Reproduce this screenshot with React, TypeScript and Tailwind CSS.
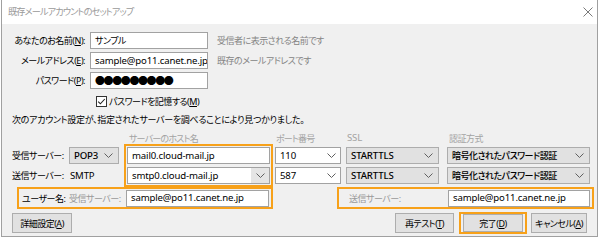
import React from "react";

const FONT = "font-['Noto_Sans','Noto_Sans_CJK_JP',sans-serif] [font-feature-settings:'palt']";
const LAT = "text-[9.6px] tracking-[-0.15px]";

function Chevron() {
  return (
    <svg width="9" height="5" viewBox="0 0 9 5" className="shrink-0">
      <path d="M0.5 0.5L4.5 4.5L8.5 0.5" fill="none" stroke="#606060" strokeWidth="1" />
    </svg>
  );
}

function TextBox({ children, className = "" }: { children: React.ReactNode; className?: string }) {
  return (
    <div className={"h-[17px] border border-[#a2a2a2] bg-white pl-[4px] flex items-center text-black whitespace-nowrap overflow-hidden " + className}>
      {children}
    </div>
  );
}

function Select({ children, latin = false }: { children: React.ReactNode; latin?: boolean }) {
  return (
    <div className="h-[17px] border border-[#adadad] bg-[#e1e1e1] pl-[4px] pr-[5px] flex items-center justify-between text-black whitespace-nowrap font-medium">
      <span className={latin ? LAT : ""}>{children}</span>
      <Chevron />
    </div>
  );
}

function Combo({ children, gray = false }: { children: React.ReactNode; gray?: boolean }) {
  return (
    <div className="h-[17px] border border-[#a2a2a2] bg-white flex items-center text-black whitespace-nowrap">
      <span className={"flex-1 pl-[4px] " + LAT}>{children}</span>
      <span className={"h-full w-[18px] flex items-center justify-center " + (gray ? "bg-[#e5e5e5]" : "")}>
        <Chevron />
      </span>
    </div>
  );
}

function Btn({ children, className = "" }: { children: React.ReactNode; className?: string }) {
  return (
    <div className={"bg-[#e1e1e1] border border-[#adadad] flex items-center justify-center text-black whitespace-nowrap " + className}>
      {children}
    </div>
  );
}

const U = ({ c }: { c: string }) => <span className="underline underline-offset-1">{c}</span>;

export default function App() {
  return (
    <div className={"w-[600px] h-[240px] bg-white text-[9px] tracking-[-0.5px] leading-none whitespace-nowrap text-black " + FONT}>
      <div className="ml-[1px] w-[597px] h-[237px] border-l border-r border-b border-[#a0a0a0] flex flex-col">
        {/* title bar */}
        <div className="h-[24px] bg-white flex items-center justify-between pl-[6px] pr-[4px] shrink-0">
          <span className="text-[#9a9a9a] text-[9.2px] tracking-[-0.9px]">既存メールアカウントのセットアップ</span>
          <svg width="10" height="10" viewBox="0 0 10 10">
            <path d="M0.5 0.5L9.5 9.5M9.5 0.5L0.5 9.5" stroke="#7a7a7a" strokeWidth="1" />
          </svg>
        </div>
        {/* body */}
        <div className="flex-1 bg-[#f0f0f0] flex flex-col">
          <div className="pt-[8px] flex flex-col gap-[3px]">
            <div className="flex items-center h-[17px]">
              <span className="w-[83px] text-right">あなたのお名前(<U c="N" />):</span>
              <TextBox className="ml-[5px] w-[118px]">サンプル</TextBox>
              <span className="ml-[9px] text-[#858585]">受信者に表示される名前です</span>
            </div>
            <div className="flex items-center h-[17px]">
              <span className="w-[83px] text-right">メールアドレス(<U c="E" />):</span>
              <TextBox className={"ml-[5px] w-[118px] " + LAT}>sample@po11.canet.ne.jp</TextBox>
              <span className="ml-[9px] text-[#858585]">既存のメールアドレスです</span>
            </div>
            <div className="flex items-center h-[17px]">
              <span className="w-[83px] text-right">パスワード(<U c="P" />):</span>
              <TextBox className="ml-[5px] w-[118px] text-[10px] tracking-[-1.4px]">●●●●●●●●●</TextBox>
            </div>
          </div>
          <div className="mt-[4px] h-[17px] pl-[94px] flex items-center gap-[2px]">
            <svg width="11" height="11" viewBox="0 0 11 11">
              <rect x="0.5" y="0.5" width="10" height="10" fill="#ffffff" stroke="#333333" />
              <path d="M2.2 5.6L4.4 7.8L8.8 3.0" fill="none" stroke="#222222" strokeWidth="1.1" />
            </svg>
            <span>パスワードを記憶する(<U c="M" />)</span>
          </div>
          <div className="mt-[2px] h-[14px] pl-[10px] flex items-center tracking-[-0.3px]">
            次のアカウント設定が、指定されたサーバーを調べることにより見つかりました。
          </div>
          {/* server block */}
          <div className="mt-[6px] flex pl-[10px]">
            <div className="w-[57px] flex flex-col">
              <div className="h-[12px]" />
              <div className="pt-[3px] flex flex-col gap-[3px]">
                <div className="h-[17px] flex items-center">受信サーバー:</div>
                <div className="h-[17px] flex items-center">送信サーバー:</div>
              </div>
            </div>
            <div className="w-[50px] mr-[5px] flex flex-col">
              <div className="h-[12px]" />
              <div className="pt-[3px] flex flex-col gap-[3px]">
                <Select latin>POP3</Select>
                <div className={"h-[17px] flex items-center pl-[1px] " + LAT}>SMTP</div>
              </div>
            </div>
            <div className="w-[149px] flex flex-col">
              <div className="h-[12px] pl-[5px] flex items-center text-[#a3a3a3] tracking-[-0.8px]">サーバーのホスト名</div>
              <div className="border-2 border-[#f7a11a] p-[1px] flex flex-col gap-[3px]">
                <TextBox className={LAT}>mail0.cloud-mail.jp</TextBox>
                <Combo gray>smtp0.cloud-mail.jp</Combo>
              </div>
            </div>
            <div className="ml-[2px] w-[66px] flex flex-col">
              <div className="h-[12px] pl-[1px] flex items-center text-[#a3a3a3] tracking-[-0.8px]">ポート番号</div>
              <div className="pt-[3px] flex flex-col gap-[3px]">
                <Combo>110</Combo>
                <Combo>587</Combo>
              </div>
            </div>
            <div className="ml-[5px] w-[93px] flex flex-col">
              <div className={"h-[12px] pl-[1px] flex items-center text-[#a3a3a3] " + LAT}>SSL</div>
              <div className="pt-[3px] flex flex-col gap-[3px]">
                <Select latin>STARTTLS</Select>
                <Select latin>STARTTLS</Select>
              </div>
            </div>
            <div className="ml-[8px] w-[143px] flex flex-col">
              <div className="h-[12px] pl-[2px] flex items-center text-[#a3a3a3]">認証方式</div>
              <div className="pt-[3px] flex flex-col gap-[3px]">
                <Select>暗号化されたパスワード認証</Select>
                <Select>暗号化されたパスワード認証</Select>
              </div>
            </div>
          </div>
          {/* username row */}
          <div className="h-[22px] flex">
            <div className="ml-[15px] w-[256px] border-2 border-[#f7a11a] flex items-center pl-[3px] pr-[2px]">
              <span className="w-[47px]">ユーザー名:</span>
              <span className="w-[57px] text-[#9a9a9a]">受信サーバー:</span>
              <TextBox className={"w-[143px] " + LAT}>sample@po11.canet.ne.jp</TextBox>
            </div>
            <div className="ml-auto mr-[3px] w-[257px] border-2 border-[#f7a11a] flex items-center pl-[10px] pr-[2px]">
              <span className="w-[99px] text-[#9a9a9a]">送信サーバー:</span>
              <TextBox className={"w-[142px] " + LAT}>sample@po11.canet.ne.jp</TextBox>
            </div>
          </div>
          {/* buttons */}
          <div className="mt-[3px] h-[22px] flex items-center">
            <Btn className="ml-[10px] w-[60px] h-[20px]">詳細設定(<U c="A" />)</Btn>
            <div className="ml-auto mr-[10px] flex items-center">
              <Btn className="w-[59px] h-[20px]">再テスト(<U c="T" />)</Btn>
              <div className="ml-[5px] w-[68px] h-[22px] border-2 border-[#f7a11a] px-[2px] flex">
                <Btn className="flex-1 h-[18px]">完了(<U c="D" />)</Btn>
              </div>
              <Btn className="ml-[4px] w-[56px] h-[20px]">キャンセル(<U c="A" />)</Btn>
            </div>
          </div>
        </div>
      </div>
    </div>
  );
}
